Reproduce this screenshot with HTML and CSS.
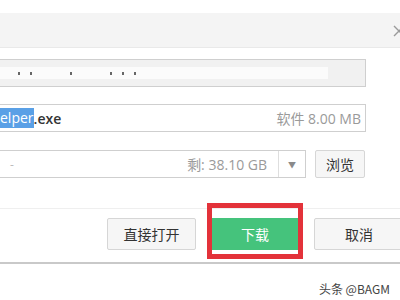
FILE: index.html
```html
<!DOCTYPE html>
<html lang="zh-CN">
<head>
  <meta charset="UTF-8">
  <meta name="viewport" content="width=device-width, initial-scale=1.0">
  <title>新建下载任务</title>
  <link rel="stylesheet" href="styles.css">
</head>
<body>
  <div class="dialog">
    <div class="header">
      <svg class="close" width="12" height="12" viewBox="0 0 12 12">
        <path d="M1 1 L11 11 M11 1 L1 11" stroke="#9a9a9a" stroke-width="1.4" fill="none"/>
      </svg>
    </div>
    <div class="content">
      <div class="field url">
        <div class="blur">
          <span class="dot"></span><span class="dot"></span><span class="dot gap"></span>
          <span class="dot gap"></span><span class="dot"></span><span class="dot"></span>
        </div>
      </div>
      <div class="field name">
        <span class="sel">elper</span><span class="ext">.exe</span>
        <span class="meta">软件 8.00 MB</span>
      </div>
      <div class="row">
        <div class="field path">
          <span class="dash">-</span>
          <span class="meta">剩: 38.10 GB</span>
          <span class="drop">&#9660;</span>
        </div>
        <button class="btn browse">浏览</button>
      </div>
    </div>
    <div class="footer">
      <button class="btn open">直接打开</button>
      <button class="btn download">下载<span class="mark"></span></button>
      <button class="btn cancel">取消</button>
    </div>
  </div>
  <div class="credit">头条 @BAGM</div>
</body>
</html>
```

FILE: styles.css
```css
body {
  margin: 0;
  width: 400px;
  height: 300px;
  overflow: hidden;
  background: #fff;
  font-family: "Open Sans", "Noto Sans CJK SC", sans-serif;
  color: #333;
}
.dialog {
  margin-top: 13px;
  border-bottom: 2px solid #c9c9c9;
}
.header {
  height: 34px;
  background: #f4f4f4;
  border-bottom: 1px solid #e9e9e9;
  display: flex;
  align-items: center;
  justify-content: flex-end;
}
.close {
  margin-right: -5px;
  margin-top: 1px;
}
.content {
  padding-top: 11px;
  display: flex;
  flex-direction: column;
  gap: 17px;
}
.field {
  box-sizing: border-box;
  height: 28px;
  border: 1px solid #cfcfcf;
  border-left: none;
  display: flex;
  align-items: center;
  font-size: 14px;
}
.url {
  width: 366px;
  background: #f1f1f1;
}
.blur {
  width: 310px;
  height: 12px;
  background: #fbfbfb;
  display: flex;
  align-items: center;
  gap: 10px;
  padding-left: 18px;
}
.dot {
  width: 2px;
  height: 3px;
  background: #666;
}
.dot.gap {
  margin-left: 28px;
}
.name {
  width: 366px;
  background: #fff;
}
.sel {
  background: #5aa0e6;
  color: #fff;
  padding: 1px 0;
  line-height: 18px;
}
.ext {
  font-weight: 600;
  color: #333;
}
.meta {
  margin-left: auto;
  color: #9a9a9a;
  padding-right: 4px;
}
.row {
  display: flex;
  gap: 9px;
  margin-top: 1px;
}
.path {
  width: 306px;
}
.dash {
  color: #bbb;
  padding-left: 10px;
  font-size: 12px;
}
.path .meta {
  padding-right: 11px;
}
.drop {
  box-sizing: border-box;
  align-self: stretch;
  width: 27px;
  border-left: 1px solid #dedede;
  color: #8a8a8a;
  font-size: 8px;
  display: flex;
  align-items: center;
  justify-content: center;
}
.btn {
  box-sizing: border-box;
  height: 28px;
  padding: 0;
  background: #f6f6f6;
  border: 1px solid #d6d6d6;
  border-radius: 2px;
  font-family: "Noto Sans CJK SC", sans-serif;
  font-size: 14px;
  color: #333;
}
.browse {
  width: 50px;
}
.footer {
  margin-top: 30px;
  border-top: 1px solid #efefef;
  padding: 9px 0 12px 107px;
  display: flex;
  gap: 16px;
}
.footer .btn {
  height: 32px;
  flex-shrink: 0;
}
.open {
  width: 89px;
}
.download {
  width: 86px;
  position: relative;
  background: #45c37c;
  border-color: #45c37c;
  color: #fff;
  border-radius: 0;
}
.mark {
  position: absolute;
  top: -16px;
  bottom: -10px;
  left: -6px;
  right: -6px;
  border: 5px solid #e3323a;
}
.cancel {
  width: 90px;
}
.credit {
  margin-top: 16px;
  padding-right: 10px;
  text-align: right;
  font-family: "Noto Sans CJK SC", sans-serif;
  font-size: 12px;
  color: #444;
}
```
